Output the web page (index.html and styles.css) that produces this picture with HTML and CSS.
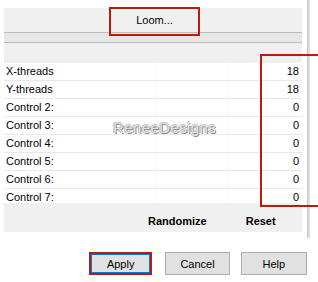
FILE: index.html
```html
<!DOCTYPE html>
<html lang="en">
  <head>
    <meta charset="UTF-8" />
    <title>Loom</title>
    <link rel="stylesheet" href="styles.css">
  </head>
  <body>
    <div class="window">
      <div class="main">
        <div class="panel">
          <div class="loom-bar">
            <div class="loom-btn">Loom...</div>
          </div>
          <div class="progress"></div>

          <div class="params">
            <div class="row"><span>X-threads</span><span></span><span class="val">18</span></div>
            <div class="row"><span>Y-threads</span><span></span><span class="val">18</span></div>
            <div class="row"><span>Control 2:</span><span></span><span class="val">0</span></div>
            <div class="row"><span>Control 3:</span><span></span><span class="val">0</span></div>
            <div class="row"><span>Control 4:</span><span></span><span class="val">0</span></div>
            <div class="row"><span>Control 5:</span><span></span><span class="val">0</span></div>
            <div class="row"><span>Control 6:</span><span></span><span class="val">0</span></div>
            <div class="row"><span>Control 7:</span><span></span><span class="val">0</span></div>
          </div>

          <div class="actions">
            <span>Randomize</span>
            <span>Reset</span>
          </div>

          <div class="mark-box"></div>
          <div class="watermark">ReneeDesigns</div>
        </div>

        <div class="buttons">
          <div class="btn apply">Apply</div>
          <div class="btn cancel">Cancel</div>
          <div class="btn help">Help</div>
        </div>
      </div>
      <div class="frame-line"></div>
    </div>
  </body>
</html>
```

FILE: styles.css
```css
html, body {
  margin: 0;
  padding: 0;
}

body {
  width: 318px;
  height: 282px;
  overflow: hidden;
  background: #ffffff;
  font-family: "Liberation Sans", Arial, sans-serif;
  font-size: 11px;
  color: #000;
}

.window {
  display: flex;
  align-items: flex-start;
}

.main {
  width: 307px;
}

.panel {
  position: relative;
  margin: 8px 0 0 4px;
  width: 298px;
  height: 224px;
  background: #f0f0f0;
}

.loom-bar {
  display: flex;
  height: 24px;
}

.loom-btn {
  position: relative;
  z-index: 2;
  margin: -1px 0 0 105px;
  width: 91px;
  height: 29px;
  box-sizing: border-box;
  border: 2px solid #b91c0c;
  display: flex;
  align-items: center;
  justify-content: center;
  padding-bottom: 4px;
  font-size: 11px;
}

.progress {
  height: 11px;
  border-top: 1px solid #bcbcbc;
  border-bottom: 1px solid #bcbcbc;
  background: #e6e6e6;
  box-sizing: border-box;
  margin-bottom: 20px;
}

.params {
  height: 140px;
  overflow: hidden;
  background: #fff;
}

.row {
  display: grid;
  grid-template-columns: 151px 73px 1fr;
  height: 18px;
  line-height: 17px;
  box-sizing: border-box;
  border-bottom: 1px solid #e8e8e8;
}

.row span {
  padding-left: 2px;
}

.row span:nth-child(2) {
  border-left: 1px solid #f6f6f6;
  border-right: 1px solid #f6f6f6;
}

.row .val {
  text-align: right;
  padding-right: 3px;
}

.actions {
  display: flex;
  gap: 39px;
  padding: 12px 0 0 144px;
  line-height: 13px;
  font-weight: bold;
}

.mark-box {
  position: absolute;
  z-index: 3;
  left: 256px;
  top: 46px;
  width: 70px;
  height: 153px;
  box-sizing: border-box;
  border: 2px solid #b91c0c;
}

.watermark {
  position: absolute;
  left: 109px;
  top: 111px;
  font-size: 15px;
  letter-spacing: 0.4px;
  color: #e2e2e2;
  text-shadow: 1px 1px 0 #8c8c8c, -1px 0 0 #b8b8b8, 0 -1px 0 #c4c4c4;
}

.buttons {
  display: flex;
  margin-top: 20px;
  padding-left: 89px;
}

.btn {
  height: 23px;
  box-sizing: border-box;
  background: #e1e1e1;
  border: 1px solid #adadad;
  display: flex;
  align-items: center;
  justify-content: center;
}

.apply {
  width: 64px;
  border: 2px solid #b91c0c;
  box-shadow: inset 0 0 0 1px #0078d7;
}

.cancel {
  width: 65px;
  margin-left: 13px;
}

.help {
  width: 67px;
  margin-left: 11px;
}

.frame-line {
  width: 3px;
  height: 238px;
  box-sizing: border-box;
  border-left: 1px solid #c6c6c6;
  background: #dedede;
}
```
